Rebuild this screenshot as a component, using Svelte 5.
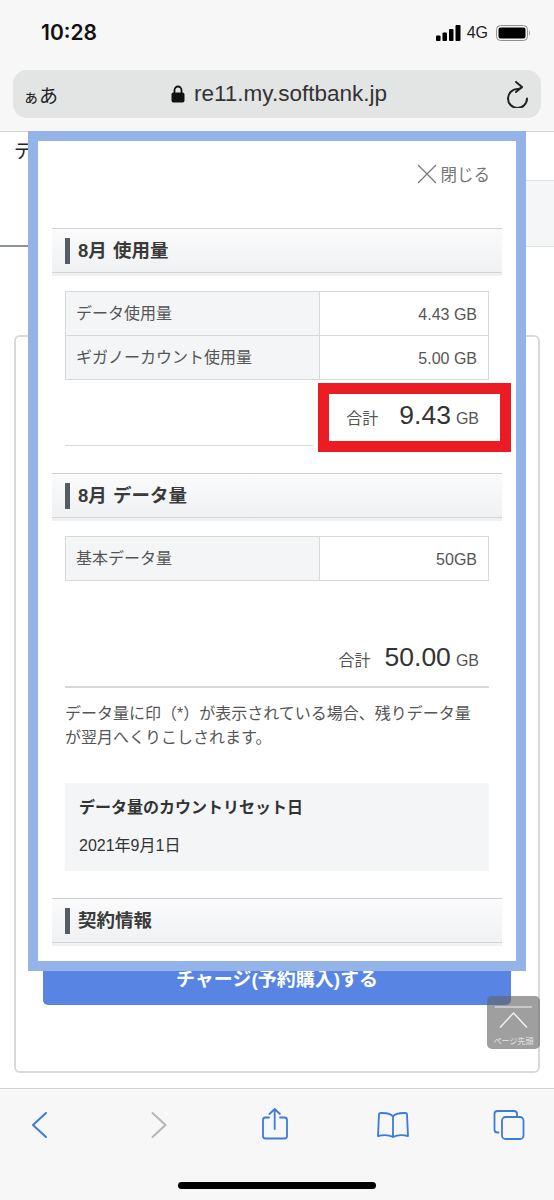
<script lang="ts">
  const usageRows = [
    { label: 'データ使用量', value: '4.43 GB' },
    { label: 'ギガノーカウント使用量', value: '5.00 GB' },
  ];
  const dataRows = [{ label: '基本データ量', value: '50GB' }];
</script>

<div class="screen">
  <header class="chrome">
    <div class="status">
      <span class="time">10:28</span>
      <div class="status-right">
        <svg class="signal" width="25" height="16" viewBox="0 0 25 16" fill="#000">
          <rect x="0" y="10.5" width="4.5" height="5.5" rx="1" />
          <rect x="6.5" y="7.5" width="4.5" height="8.5" rx="1" />
          <rect x="13" y="4" width="4.5" height="12" rx="1" />
          <rect x="19.5" y="0" width="5" height="16" rx="1" />
        </svg>
        <span class="network">4G</span>
        <svg class="battery" width="34" height="16" viewBox="0 0 34 16">
          <rect x="0.5" y="0.5" width="31" height="15" rx="4" fill="none" stroke="#8e8e8e" />
          <rect x="2.5" y="2.5" width="27" height="11" rx="2" fill="#000" />
          <path d="M33 5.5c1 .5 1 4.500 0 5z" fill="#8e8e8e" />
        </svg>
      </div>
    </div>
    <div class="urlbar">
      <span class="aa"><small>ぁ</small>あ</span>
      <div class="address">
        <svg width="14" height="18" viewBox="0 0 14 18">
          <path d="M3.500 8V5a3.500 3.500 0 0 1 7 0v3" fill="none" stroke="#111" stroke-width="1.800" />
          <rect x="0.500" y="7.500" width="13" height="10" rx="2" fill="#111" />
        </svg>
        <span>re11.my.softbank.jp</span>
      </div>
      <svg class="reload" width="21" height="28" viewBox="0 0 21 28" fill="none" stroke="#222" stroke-width="2" stroke-linecap="round" stroke-linejoin="round">
        <path d="M14.500 7.500Q12.500 9 11 9A9.500 9.500 0 1 0 20 18.500" />
        <path d="M9 2l6 5-6 5" />
      </svg>
    </div>
  </header>

  <main class="page">
    <p class="page-title">データ</p>
    <div class="tabs">
      <div class="tab-current"></div>
      <div class="tab-other"></div>
    </div>
    <section class="card">
      <button class="charge">チャージ(予約購入)する</button>
    </section>

    <div class="to-top">
      <svg width="37" height="28" viewBox="0 0 37 28" fill="none" stroke="#f1f1f1">
        <path d="M0 1h37" stroke-width="1" />
        <path d="M5 21.500L18.500 7 32 21.500" stroke-width="1.500" />
      </svg>
      <span>ページ先頭</span>
    </div>
  </main>

  <footer class="toolbar">
    <div class="tools">
      <svg width="40" height="32" viewBox="0 0 40 32" fill="none" stroke="#3a7bdc" stroke-width="2" stroke-linecap="round" stroke-linejoin="round">
        <path d="M27 5L14 17l13 12" />
      </svg>
      <svg width="40" height="32" viewBox="0 0 40 32" fill="none" stroke="#b4b6b8" stroke-width="2" stroke-linecap="round" stroke-linejoin="round">
        <path d="M15.500 5l13 12-13 12" />
      </svg>
      <svg width="40" height="32" viewBox="0 0 40 32" fill="none" stroke="#3a7bdc" stroke-width="1.800" stroke-linecap="round" stroke-linejoin="round">
        <path d="M15 9.500h-3.500a2.500 2.500 0 0 0-2.500 2.500v16a2.500 2.500 0 0 0 2.500 2.500h19a2.500 2.500 0 0 0 2.500-2.500V12a2.500 2.500 0 0 0-2.500-2.500H26" />
        <path d="M20.700 21V1M15.500 6l5.200-5 5.200 5" />
      </svg>
      <svg width="40" height="32" viewBox="0 0 40 32" fill="none" stroke="#3a7bdc" stroke-width="1.800" stroke-linecap="round" stroke-linejoin="round">
        <path d="M21 8.500C19 5.500 15 4.800 8.500 5c-1 0-1.500.6-1.500 1.500L6 28c5-1.200 11-1.200 15 1 4-2.200 10-2.200 15 -1L35 6.500C35 5.600 34.500 5 33.500 5 27 4.800 23 5.500 21 8.500zV29" />
      </svg>
      <svg width="40" height="32" viewBox="0 0 40 32" fill="none" stroke="#3a7bdc" stroke-width="1.800" stroke-linecap="round" stroke-linejoin="round">
        <path d="M9.500 24.500H8.500A3 3 0 0 1 5.500 21.500V6A3 3 0 0 1 8.500 3H25A3 3 0 0 1 28 6V8.500" />
        <rect x="13" y="9" width="21.500" height="22" rx="3.500" />
      </svg>
    </div>
    <div class="home-bar"></div>
  </footer>

  <div class="modal">
    <div class="close">
      <svg width="20" height="20" viewBox="0 0 20 20" stroke="#777" stroke-width="1.200" fill="none">
        <path d="M1 1l18 18M19 1L1 19" />
      </svg>
      <span>閉じる</span>
    </div>

    <h2 class="heading"><span>8月 使用量</span></h2>
    <table class="rows">
      <tbody>
        {#each usageRows as row}
          <tr><th>{row.label}</th><td>{row.value}</td></tr>
        {/each}
      </tbody>
    </table>
    <div class="total first">
      <span class="total-label">合計</span>
      <span class="total-value">9.43</span>
      <span class="total-unit">GB</span>
      <div class="highlight"></div>
    </div>

    <h2 class="heading"><span>8月 データ量</span></h2>
    <table class="rows">
      <tbody>
        {#each dataRows as row}
          <tr><th>{row.label}</th><td>{row.value}</td></tr>
        {/each}
      </tbody>
    </table>
    <div class="total second">
      <span class="total-label">合計</span>
      <span class="total-value">50.00</span>
      <span class="total-unit">GB</span>
    </div>

    <p class="note">データ量に印（*）が表示されている場合、残りデータ量が翌月へくりこしされます。</p>

    <div class="reset">
      <strong>データ量のカウントリセット日</strong>
      <span>2021年9月1日</span>
    </div>

    <h2 class="heading"><span>契約情報</span></h2>
  </div>
</div>

<style>
  :global(body) {
    margin: 0;
    background: #fff;
  }

  .screen {
    position: relative;
    width: 554px;
    height: 1200px;
    display: flex;
    flex-direction: column;
    overflow: hidden;
    font-family: "Liberation Sans", "Noto Sans CJK JP", sans-serif;
    color: #333;
  }

  .chrome {
    height: 132px;
    box-sizing: border-box;
    background: #f7f7f7;
    border-bottom: 1px solid #d2d3d4;
    flex: none;
  }

  .status {
    height: 70px;
    box-sizing: border-box;
    padding: 25px 24px 0 41px;
    display: flex;
    justify-content: space-between;
    align-items: flex-start;
  }

  .time {
    font-family: Inter, sans-serif;
    font-weight: 600;
    font-size: 21px;
    line-height: 16px;
    color: #111;
  }

  .status-right {
    display: flex;
    align-items: center;
    gap: 6px;
  }

  .network {
    font-size: 16px;
    line-height: 16px;
    color: #222;
    margin-right: 2px;
  }

  .urlbar {
    height: 48px;
    margin: 0 13px;
    padding: 0 13px 0 10px;
    background: #e3e4e4;
    border-radius: 14px;
    display: flex;
    align-items: center;
    justify-content: space-between;
  }

  .aa {
    font-size: 19px;
    color: #222;
  }

  .aa small {
    font-size: 16px;
  }

  .address {
    display: flex;
    align-items: center;
    gap: 9px;
    margin-right: 7px;
    font-size: 22.500px;
    color: #333;
  }

  .page {
    position: relative;
    flex: 1;
    padding-top: 7px;
    min-height: 0;
  }

  .page-title {
    margin: 0 0 15px 14px;
    font-size: 19px;
    line-height: 26px;
    color: #222;
  }

  .tabs {
    height: 67px;
    display: flex;
  }

  .tab-current {
    flex: 1;
    border-bottom: 2px solid #8b949c;
  }

  .tab-other {
    flex: 1;
    background: #f5f6f7;
    border-top: 1px solid #dfe0e1;
    border-bottom: 1px solid #dfe0e1;
  }

  .card {
    height: 738px;
    box-sizing: border-box;
    margin: 88px 14px 0;
    padding: 0 27px 66px;
    border: 2px solid #d9d9d9;
    border-radius: 6px;
    display: flex;
    flex-direction: column;
    justify-content: flex-end;
  }

  .charge {
    height: 52px;
    padding: 0 0 4px;
    border: none;
    border-radius: 5px;
    background: #5884e4;
    color: #fff;
    font: bold 19px "Liberation Sans", "Noto Sans CJK JP", sans-serif;
  }

  .to-top {
    position: absolute;
    top: 864px;
    left: 487px;
    width: 53px;
    height: 53px;
    box-sizing: border-box;
    padding-top: 10px;
    border-radius: 5px;
    background: rgba(100, 100, 100, 0.62);
    display: flex;
    flex-direction: column;
    align-items: center;
    color: #e8e8e8;
    font-size: 8px;
  }

  .to-top span {
    line-height: 12px;
    margin-top: 2px;
    white-space: nowrap;
  }

  .toolbar {
    height: 112px;
    box-sizing: border-box;
    flex: none;
    background: #f7f7f7;
    border-top: 1px solid #d2d3d4;
    padding-top: 19px;
  }

  .tools {
    display: flex;
    justify-content: space-between;
    padding: 0 25px 0 19px;
  }

  .tools svg {
    display: block;
  }

  .home-bar {
    width: 198px;
    height: 7px;
    margin: 42px auto 0;
    border-radius: 4px;
    background: #000;
  }

  .modal {
    position: absolute;
    top: 131px;
    left: 28px;
    width: 498px;
    height: 840px;
    box-sizing: border-box;
    border: 10px solid #93b3e9;
    background: #fff;
    overflow: hidden;
  }

  .close {
    height: 24px;
    margin: 21px 26px 42px 0;
    display: flex;
    justify-content: flex-end;
    align-items: center;
    gap: 4px;
    font-size: 16.500px;
    color: #777;
  }

  .heading {
    height: 48px;
    box-sizing: border-box;
    margin: 0 14px;
    padding-bottom: 3px;
    border-top: 1px solid #cfd2d5;
    display: flex;
    align-items: center;
    padding-left: 13px;
    background:
      linear-gradient(#d3d5d8, #d3d5d8) 0 calc(100% - 3px) / 100% 1px no-repeat,
      linear-gradient(#f0f1f2, #f0f1f2) 0 100% / 100% 3px no-repeat,
      linear-gradient(#fbfbfc, #eef0f2);
    font-size: 18.500px;
    font-weight: bold;
    color: #3a3a3a;
  }

  .heading span {
    border-left: 5px solid #565c64;
    padding-left: 8px;
    line-height: 26px;
    word-spacing: 1px;
  }

  .rows {
    width: 424px;
    margin: 15px 27px 0;
    border-collapse: collapse;
    table-layout: fixed;
    font-size: 16px;
    color: #555;
  }

  .rows th,
  .rows td {
    height: 44px;
    box-sizing: border-box;
    padding: 0 11px;
    border: 1px solid #d6d8da;
    font-weight: normal;
  }

  .rows th {
    width: 254px;
    padding: 0 0 3px 10px;
    text-align: left;
    background: #f4f5f7;
  }

  .rows td {
    padding-top: 3px;
    text-align: right;
  }

  .total {
    position: relative;
    box-sizing: border-box;
    margin: 0 27px;
    padding-right: 10px;
    display: flex;
    justify-content: flex-end;
    align-items: baseline;
    border-bottom: 1px solid #d6d8da;
    color: #555;
  }

  .total.first {
    padding-top: 20px;
    height: 66px;
    gap: 5px;
    margin-bottom: 27px;
  }

  .total.first .total-label {
    margin-right: 16px;
  }

  .total.second {
    padding-top: 61px;
    height: 107px;
    border-bottom-width: 2px;
    gap: 5px;
  }

  .total.second .total-label {
    margin-right: 9px;
  }

  .total-label {
    font-size: 16px;
  }

  .total-value {
    font-size: 26.500px;
    color: #333;
  }

  .total-unit {
    font-size: 16px;
  }

  .highlight {
    position: absolute;
    top: 3px;
    left: 253px;
    width: 193px;
    height: 69px;
    box-sizing: border-box;
    border: 11px solid #ec1c24;
    box-shadow: -5px 0 0 #fff;
  }

  .note {
    margin: 14px 32px 33px 27px;
    font-size: 16px;
    line-height: 24px;
    color: #555;
  }

  .reset {
    height: 88px;
    box-sizing: border-box;
    margin: 0 27px 27px;
    padding: 14px 14px 0;
    background: #f4f5f7;
    display: flex;
    flex-direction: column;
    gap: 16px;
    font-size: 16px;
    line-height: 22px;
    color: #333;
  }
</style>
